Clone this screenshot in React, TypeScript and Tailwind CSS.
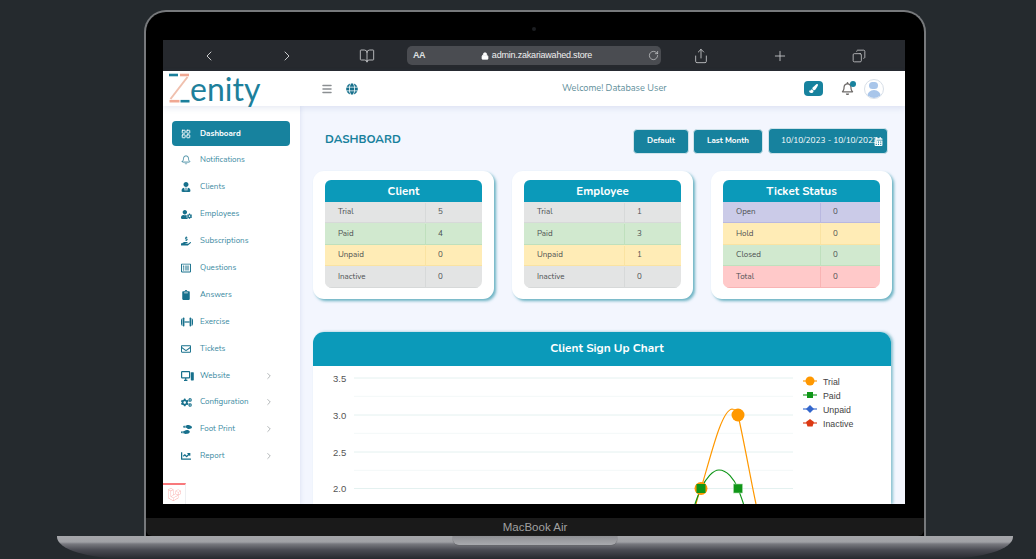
import {
  Bell,
  BookOpen,
  ChevronLeft,
  ChevronRight,
  Copy,
  Lock,
  Menu,
  Plus,
  RotateCw,
  Share,
  LayoutGrid,
} from "lucide-react";
import type { ReactNode } from "react";
import {
  FaCalendarAlt,
  FaChartLine,
  FaClipboard,
  FaCogs,
  FaGlobe,
  FaHandHoldingUsd,
  FaPaintBrush,
  FaRegBell,
  FaRegEnvelope,
  FaRegListAlt,
  FaShoePrints,
  FaUserCog,
  FaUserTie,
} from "react-icons/fa";
import { SiLaravel } from "react-icons/si";

const uiFont = "font-['Nunito','Lato','Noto_Sans',sans-serif]";

type NavItem = { label: string; icon: ReactNode; sub?: boolean; active?: boolean };

const iconCls = "h-[10px] w-[10px]";

// plates with a thin double-headed bar between them
function ExerciseIcon() {
  return (
    <svg viewBox="0 0 12 10" className="h-[10px] w-[12px]" fill="currentColor">
      <path d="M0 3.6C0 2.4.6 1.5 1.4 1v8C.6 8.5 0 7.6 0 6.4z" />
      <rect x="1.9" y=".6" width="1.5" height="8.8" rx=".6" />
      <rect x="3.4" y="4.4" width="5.2" height="1.2" />
      <rect x="8.6" y=".6" width="1.5" height="8.8" rx=".6" />
      <path d="M12 3.6c0-1.2-.6-2.1-1.4-2.6v8c.8-.5 1.4-1.400 1.400-2.600z" />
    </svg>
  );
}

// monitor with a phone beside it
function WebsiteIcon() {
  return (
    <svg viewBox="0 0 13 10" className="h-[10px] w-[13px]">
      <rect x=".6" y=".6" width="8" height="6.2" rx=".6" fill="none" stroke="currentColor" strokeWidth="1.2" />
      <path d="M3 9.400h3.400M4.700 7v2.400" stroke="currentColor" strokeWidth="1.200" />
      <rect x="9.800" y="1.200" width="3" height="8.200" rx=".6" fill="currentColor" />
    </svg>
  );
}

const nav: NavItem[] = [
  { label: "Dashboard", icon: <LayoutGrid className={iconCls} strokeWidth={2.2} />, active: true },
  { label: "Notifications", icon: <Bell className={iconCls} strokeWidth={1.8} /> },
  { label: "Clients", icon: <FaUserTie className={iconCls} /> },
  { label: "Employees", icon: <FaUserCog className="h-[11px] w-[11px]" /> },
  { label: "Subscriptions", icon: <FaHandHoldingUsd className={iconCls} /> },
  { label: "Questions", icon: <FaRegListAlt className={iconCls} /> },
  { label: "Answers", icon: <FaClipboard className={iconCls} /> },
  { label: "Exercise", icon: <ExerciseIcon /> },
  { label: "Tickets", icon: <FaRegEnvelope className={iconCls} /> },
  { label: "Website", icon: <WebsiteIcon />, sub: true },
  { label: "Configuration", icon: <FaCogs className="h-[11px] w-[11px]" />, sub: true },
  { label: "Foot Print", icon: <FaShoePrints className="h-[11px] w-[11px]" />, sub: true },
  { label: "Report", icon: <FaChartLine className={iconCls} />, sub: true },
];

type Tone = "gray" | "green" | "yellow" | "purple" | "red";

const tones: Record<Tone, string> = {
  gray: "bg-[#e3e4e4] border-[#d7d9d9]",
  green: "bg-[#d1e9cf] border-[#bfe0bd]",
  yellow: "bg-[#ffecb6] border-[#fae3a2]",
  purple: "bg-[#cbcbe8] border-[#b9b8e0]",
  red: "bg-[#ffc9c9] border-[#f9b4b4]",
};

type Row = { label: string; value: number; tone: Tone };

const cards: { title: string; labelCol: string; rows: Row[] }[] = [
  {
    title: "Client",
    labelCol: "w-[101px]",
    rows: [
      { label: "Trial", value: 5, tone: "gray" },
      { label: "Paid", value: 4, tone: "green" },
      { label: "Unpaid", value: 0, tone: "yellow" },
      { label: "Inactive", value: 0, tone: "gray" },
    ],
  },
  {
    title: "Employee",
    labelCol: "w-[101px]",
    rows: [
      { label: "Trial", value: 1, tone: "gray" },
      { label: "Paid", value: 3, tone: "green" },
      { label: "Unpaid", value: 1, tone: "yellow" },
      { label: "Inactive", value: 0, tone: "gray" },
    ],
  },
  {
    title: "Ticket Status",
    labelCol: "w-[98px]",
    rows: [
      { label: "Open", value: 0, tone: "purple" },
      { label: "Hold", value: 0, tone: "yellow" },
      { label: "Closed", value: 0, tone: "green" },
      { label: "Total", value: 0, tone: "red" },
    ],
  },
];

function SafariBar() {
  return (
    <div className="flex h-[31px] shrink-0 items-center bg-[#26292e] text-[#c9cacc]">
      <ChevronLeft className="ml-[38px] h-4 w-4" strokeWidth={1.5} />
      <ChevronRight className="ml-[62px] h-4 w-4" strokeWidth={1.5} />
      <BookOpen className="ml-[64px] h-4 w-4" strokeWidth={1.3} />
      <div className="ml-[32px] flex h-[19px] w-[254px] items-center rounded-[5px] bg-[#4a4c51] pl-[6px] pr-[2px] font-['Liberation_Sans',sans-serif] text-white">
        <span className="text-[9px] font-bold tracking-[-0.5px] text-[#dfe0e2]">AA</span>
        <div className="flex flex-1 items-center justify-center">
          <Lock className="mr-[3px] h-[8px] w-[8px] fill-white" strokeWidth={2} />
          <span className="text-[9px] tracking-[-0.2px] text-[#f0f0f0]">admin.zakariawahed.store</span>
        </div>
        <RotateCw className="h-[11px] w-[11px] text-[#d5d6d8]" strokeWidth={1.4} />
      </div>
      <Share className="ml-[32px] h-4 w-4" strokeWidth={1.3} />
      <Plus className="ml-[63px] h-4 w-4" strokeWidth={1.3} />
      <Copy className="ml-[64px] h-[14px] w-[14px] -scale-x-100" strokeWidth={1.4} />
    </div>
  );
}

function Logo() {
  return (
    <div className="flex h-full w-[137px] shrink-0 items-start pl-[6px] pt-[1px]">
      <svg viewBox="0 0 21 31" className="h-[31px] w-[21px] shrink-0">
        <path d="M0 3h9" stroke="#1a7f9c" strokeWidth="2.6" />
        <path d="M11 3h9" stroke="#f0a893" strokeWidth="2.6" />
        <path d="M18.5 5 1.5 27" stroke="#f0c0ae" strokeWidth="2" />
        <path d="M0.5 29.2h10" stroke="#f0a893" strokeWidth="2.6" />
        <path d="M11.5 29.2h9" stroke="#1a7f9c" strokeWidth="2.6" />
      </svg>
      <span className="mt-[-3px] font-['Lato',sans-serif] text-[32px] leading-[40px] text-[#1d809b]">
        enity
      </span>
    </div>
  );
}

function TopBar() {
  return (
    <header className="relative z-10 flex h-[35px] shrink-0 items-center bg-white shadow-[0_2px_6px_rgba(90,110,170,0.15)]">
      <Logo />
      <Menu className="ml-[21px] h-[12px] w-[12px] text-[#8b8f92]" strokeWidth={3} />
      <FaGlobe className="ml-[13px] h-[12px] w-[12px] text-[#17708c]" />
      <span className={`ml-[204px] whitespace-nowrap text-[9.2px] text-[#5f8f9b] ${uiFont}`}>Welcome! Database User</span>
      <div className="ml-[137px] flex h-[15px] w-[19px] items-center justify-center rounded-[4px] bg-[#17829e]">
        <FaPaintBrush className="h-[9px] w-[9px] text-white" />
      </div>
      <div className="relative ml-[18px] h-[13px] w-[13px]">
        <FaRegBell className="h-[13px] w-[13px] text-[#6d6a68]" />
        <span className="absolute -right-[2px] -top-[1px] h-[6px] w-[6px] rounded-full bg-[#17829e]" />
      </div>
      <div className="ml-[10px] flex h-[20px] w-[20px] flex-col items-center overflow-hidden rounded-full border border-[#d8dfe8] bg-white">
        <div className="mt-[2px] h-[9px] w-[9px] rounded-full bg-[#a9c6ea]" />
        <div className="mt-[1px] h-[8px] w-[14px] rounded-t-full bg-[#a9c6ea]" />
      </div>
    </header>
  );
}

function Sidebar() {
  return (
    <aside className={`relative flex w-[137px] shrink-0 flex-col gap-[1.9px] bg-white pt-[15px] shadow-[1px_0_4px_rgba(90,110,170,0.12)] ${uiFont}`}>
      {nav.map((item) => (
        <div
          key={item.label}
          className={`ml-[9px] mr-[10px] flex h-[25px] items-center rounded-[4px] pl-[9px] text-[8px] ${
            item.active ? "bg-[#17829e] font-bold text-white" : "text-[#3a8a9f]"
          }`}
        >
          <span className={`flex w-[19px] shrink-0 items-center ${item.active ? "text-white" : "text-[#17708c]"}`}>
            {item.icon}
          </span>
          <span className="flex-1">{item.label}</span>
          {item.sub && <ChevronRight className="mr-[16px] h-[10px] w-[10px] text-[#8d9295]" strokeWidth={1.6} />}
        </div>
      ))}
      <div className="absolute bottom-0 left-0 flex h-[21px] w-[23px] items-center justify-center border-t-2 border-r border-[#f8797c] border-r-[#eef0f2] bg-white">
        <SiLaravel className="h-[13px] w-[13px] text-[#f9a7a4]" />
      </div>
    </aside>
  );
}

function StatCard({ title, labelCol, rows }: { title: string; labelCol: string; rows: Row[] }) {
  return (
    <section className="w-[181px] rounded-[11px] bg-white px-[12px] pb-[11px] pt-[9px] shadow-[2px_2px_3px_rgba(50,150,170,0.7)]">
      <h3 className={`flex h-[21.5px] items-center justify-center rounded-t-[6px] bg-[#0b9aba] pt-[1px] text-[11.5px] font-bold text-white ${uiFont}`}>
        {title}
      </h3>
      <div className={`overflow-hidden rounded-b-[7px] text-[8px] text-[#4c5052] ${uiFont}`}>
        {rows.map((r) => (
          <div key={r.label} className={`flex h-[21.5px] items-center border-b pt-[1px] ${tones[r.tone]}`}>
            <span className={`flex h-full items-center border-r pl-[13px] ${labelCol} ${tones[r.tone]}`}>{r.label}</span>
            <span className="pl-[12px]">{r.value}</span>
          </div>
        ))}
      </div>
    </section>
  );
}

function SignUpChart() {
  const majors = [
    { y: 12, label: "3.5" },
    { y: 49, label: "3.0" },
    { y: 86, label: "2.5" },
    { y: 122.5, label: "2.0" },
  ];
  const legend = [
    { label: "Trial", color: "#ff9800", y: 15 },
    { label: "Paid", color: "#109618", y: 29 },
    { label: "Unpaid", color: "#3366cc", y: 43 },
    { label: "Inactive", color: "#dc3912", y: 57 },
  ];
  return (
    <svg viewBox="0 0 578 138" className="block h-[138px] w-[578px] font-['Liberation_Sans',sans-serif]">
      {majors.map((m) => (
        <g key={m.label}>
          <line x1="41" x2="480" y1={m.y} y2={m.y} stroke="#e4f1f0" strokeWidth="1" />
          <line x1="41" x2="480" y1={m.y + 18.3} y2={m.y + 18.3} stroke="#f3f8f8" strokeWidth="1" />
          <text x="20" y={m.y + 3.5} fontSize="9.5" fill="#555">
            {m.label}
          </text>
        </g>
      ))}
      <path d="M383 138C385 130 386 127 388 122.5C398 90 408 45 419 43C422 43 424 46 425 49C431 75 438 115 443 138" fill="none" stroke="#ff9800" strokeWidth="1.2" />
      <path d="M382 138C384 132 386 127 388 122.5C393 112 400 104 406 104C414 104 421 113 425 122.5C427 128 429 133 430.5 138" fill="none" stroke="#109618" strokeWidth="1.2" />
      <circle cx="388" cy="122.5" r="6.5" fill="#ff9800" />
      <circle cx="425" cy="49" r="6.5" fill="#ff9800" />
      <rect x="383.5" y="118" width="9" height="9" fill="#109618" />
      <rect x="420.5" y="118" width="9" height="9" fill="#109618" stroke="#a8dcab" strokeWidth="0.6" />
      {legend.map((l) => (
        <g key={l.label}>
          <line x1="490" x2="504" y1={l.y} y2={l.y} stroke={l.color} strokeWidth="1.6" opacity="0.7" />
          {l.label === "Trial" && <circle cx="497" cy={l.y} r="4.5" fill={l.color} />}
          {l.label === "Paid" && <rect x="494" y={l.y - 3} width="6" height="6" fill={l.color} />}
          {l.label === "Unpaid" && <path d={`M497 ${l.y - 4}l4 4-4 4-4-4z`} fill={l.color} />}
          {l.label === "Inactive" && <path d={`M497 ${l.y - 4}l4 3-1.5 4.5h-5L493 ${l.y - 1}z`} fill={l.color} />}
          <text x="510" y={l.y + 3.5} fontSize="8.8" fill="#444">
            {l.label}
          </text>
        </g>
      ))}
    </svg>
  );
}

function Dashboard() {
  const btn = "flex items-center justify-center rounded-[4px] border border-[#cfe3ea] bg-[#17829e] text-[8px] font-bold text-white";
  return (
    <main className="min-w-0 flex-1 bg-[#f3f6fe] px-[13px] pt-[22px]">
      <div className={`flex h-[26px] items-center pl-[12px] pr-[4px] ${uiFont}`}>
        <h1 className="flex-1 pb-[3px] text-[11.6px] font-bold text-[#17809c]">DASHBOARD</h1>
        <button type="button" className={`${btn} h-[25px] w-[56px]`}>Default</button>
        <button type="button" className={`${btn} ml-[4px] h-[25px] w-[70px]`}>Last Month</button>
        <button type="button" className={`${btn} ml-[5px] h-[26px] w-[120px] justify-start pl-[12px] font-normal`}>
          <span className="whitespace-nowrap text-[8.3px]">10/10/2023 - 10/10/2023</span>
          <FaCalendarAlt className="-ml-[4px] h-[9px] w-[9px] shrink-0" />
        </button>
      </div>
      <div className="mt-[17px] flex gap-[18px]">
        {cards.map((c) => (
          <StatCard key={c.title} title={c.title} labelCol={c.labelCol} rows={c.rows} />
        ))}
      </div>
      <section className="mt-[33px] w-[578px] overflow-hidden rounded-t-[11px] bg-white shadow-[2px_0_3px_rgba(50,150,170,0.55)]">
        <h2 className={`flex h-[34px] items-center justify-center bg-[#0b9aba] pl-[10px] pt-[1px] text-[11.8px] font-bold text-white ${uiFont}`}>
          Client Sign Up Chart
        </h2>
        <SignUpChart />
      </section>
    </main>
  );
}

export default function App() {
  return (
    <div className="flex h-[559px] w-[1036px] flex-col items-center overflow-hidden bg-[#252a2e] pl-[34px] pt-[10px]">
      <div className="flex h-[526px] w-[782px] shrink-0 flex-col rounded-t-[22px] border-2 border-b-0 border-[#77797c] bg-black pl-[17px] pr-[19px]">
        <div className="flex h-[28px] shrink-0 items-center justify-center pt-[6px]">
          <span className="h-[4px] w-[4px] rounded-full bg-[#1c1e22]" />
        </div>
        <div className="flex h-[464px] shrink-0 flex-col overflow-hidden">
          <SafariBar />
          <TopBar />
          <div className="flex min-h-0 flex-1 overflow-hidden">
            <Sidebar />
            <Dashboard />
          </div>
        </div>
        <div className="-ml-[17px] -mr-[19px] mt-[14px] flex h-[18px] items-center justify-center rounded-b-[6px] bg-[#1a1a1a] pt-[2px] font-['Liberation_Sans',sans-serif] text-[11.5px] text-[#a0a0a0]">
          MacBook Air
        </div>
      </div>
      <div className="flex h-[23px] w-[956px] shrink-0 justify-center rounded-b-[70px_22px] bg-[linear-gradient(to_bottom,#a5a6aa_0,#a0a1a5_6px,#77787e_8px,#4a4b53_14px,#26282e_23px)]">
        <div className="h-[9px] w-[164px] rounded-b-[6px] bg-[linear-gradient(to_bottom,#8f9094,#a9aaae)] shadow-[0_0_1px_#333]" />
      </div>
    </div>
  );
}
